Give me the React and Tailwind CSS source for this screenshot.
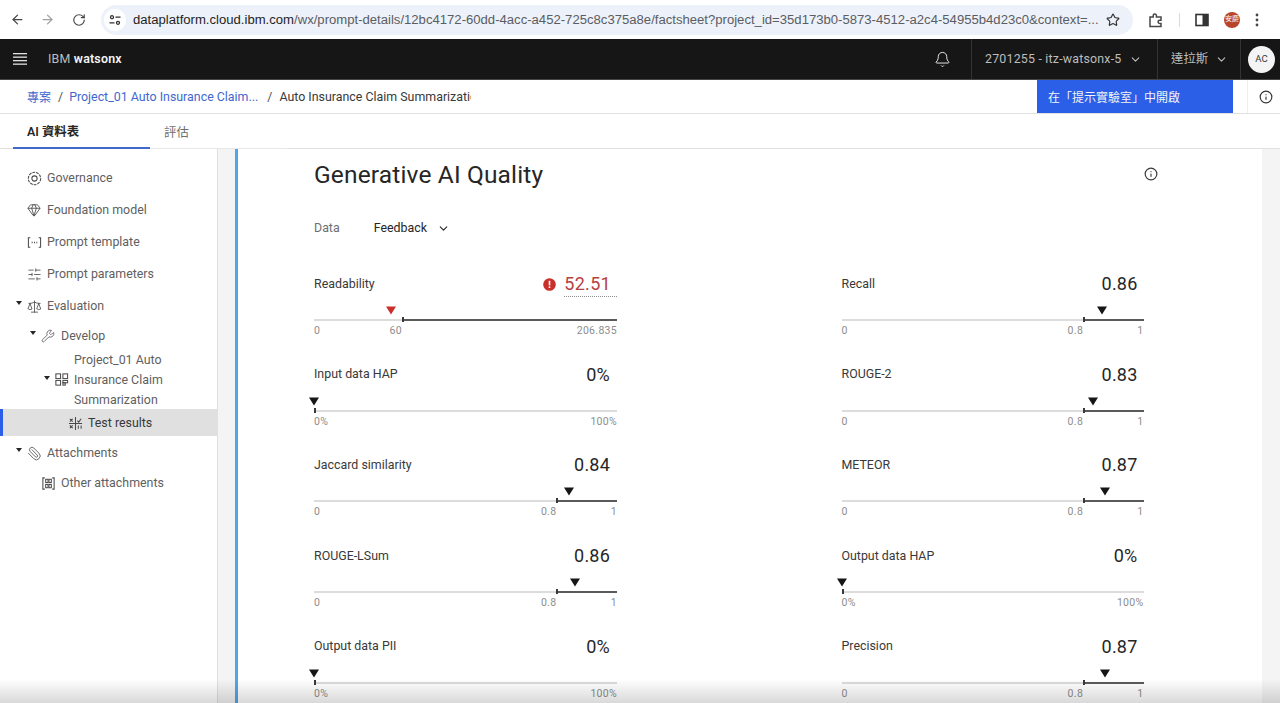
import React from "react";
import { ArrowLeft, ArrowRight, RotateCw, Star, Bell, ChevronDown, Info, Wrench, Paperclip, Scale, SlidersHorizontal, Gem } from "lucide-react";

function Tri({ red }) {
  return (
    <svg width="12" height="9" viewBox="0 0 12 9" className="block">
      <path d="M1 0.5h10L6 8.5z" fill={red ? "#c9302c" : "#161616"} />
    </svg>
  );
}

function Metric({ label, value, min, thr, max, thrPct, markPct, full, red, w, vp }) {
  return (
    <div className={`h-[90.7px] ${w}`}>
      <div className="flex h-[30px] items-center justify-between">
        <span className="text-[12.4px] text-[#393939]">{label}</span>
        {red ? (
          <span className="flex items-center">
            <svg width="13" height="13" viewBox="0 0 13 13" className="mr-[8px]">
              <circle cx="6.5" cy="6.5" r="6.3" fill="#c9302c" />
              <rect x="5.7" y="2.8" width="1.6" height="4.6" fill="#fff" />
              <rect x="5.7" y="8.4" width="1.6" height="1.6" fill="#fff" />
            </svg>
            <span className="border-b border-dotted border-[#8d8d8d] pr-[6px] text-[18px] leading-[24px] tracking-[0.3px] text-[#b5413f]">{value}</span>
          </span>
        ) : (
          <span className={`${vp} text-[18px] leading-[24px] tracking-[0.2px] text-[#262626]`}>{value}</span>
        )}
      </div>
      <div className="relative mt-[4px] h-[21px]">
        <div className="absolute top-[3px]" style={{ left: `calc(${markPct}% - 6px)` }}>
          <Tri red={red} />
        </div>
        <div className="absolute inset-x-0 top-[16px] h-[2px] bg-[#dcdcdc]" />
        {full ? (
          <div className="absolute left-0 top-[14px] h-[5px] w-[2px] bg-[#393939]" />
        ) : (
          <>
            <div className="absolute right-0 top-[16px] h-[2px] bg-[#5a5a5a]" style={{ left: `${thrPct}%` }} />
            <div className="absolute top-[14px] h-[5px] w-[2px] bg-[#393939]" style={{ left: `${thrPct}%` }} />
          </>
        )}
      </div>
      <div className="relative flex justify-between text-[10.5px] leading-[14px] tracking-[0.3px] text-[#8d8d8d]">
        <span>{min}</span>
        {thr && (
          <span className="absolute -translate-x-full" style={{ left: `${thrPct}%` }}>
            {thr}
          </span>
        )}
        <span>{max}</span>
      </div>
    </div>
  );
}

const left = [
  { label: "Readability", value: "52.51", min: "0", thr: "60", max: "206.835", thrPct: 29, markPct: 25.4, red: true },
  { label: "Input data HAP", value: "0%", min: "0%", max: "100%", markPct: 0, full: true },
  { label: "Jaccard similarity", value: "0.84", min: "0", thr: "0.8", max: "1", thrPct: 80, markPct: 84.2 },
  { label: "ROUGE-LSum", value: "0.86", min: "0", thr: "0.8", max: "1", thrPct: 80, markPct: 86.2 },
  { label: "Output data PII", value: "0%", min: "0%", max: "100%", markPct: 0, full: true },
];
const right = [
  { label: "Recall", value: "0.86", min: "0", thr: "0.8", max: "1", thrPct: 80, markPct: 86.2 },
  { label: "ROUGE-2", value: "0.83", min: "0", thr: "0.8", max: "1", thrPct: 80, markPct: 83.2 },
  { label: "METEOR", value: "0.87", min: "0", thr: "0.8", max: "1", thrPct: 80, markPct: 87.2 },
  { label: "Output data HAP", value: "0%", min: "0%", max: "100%", markPct: 0, full: true },
  { label: "Precision", value: "0.87", min: "0", thr: "0.8", max: "1", thrPct: 80, markPct: 87.2 },
];

const Svg = ({ children, size = 15 }) => (
  <svg width={size} height={size} viewBox="0 0 16 16" fill="none" stroke="#4a4a4a" strokeWidth="1.1" className="shrink-0">
    {children}
  </svg>
);

const GovIcon = () => (
  <Svg>
    <circle cx="8" cy="8" r="6.6" strokeDasharray="3 1" />
    <circle cx="8" cy="8" r="2.8" />
  </Svg>
);
const TemplateIcon = () => (
  <Svg>
    <path d="M3.5 3H1.5v10h2M12.5 3h2v10h-2" />
    <path d="M5 8h1M7.5 8h1M10 8h1" strokeWidth="1.5" />
  </Svg>
);
const FlowIcon = () => (
  <Svg>
    <rect x="2" y="2" width="5" height="5" />
    <rect x="9.5" y="2" width="5" height="5" />
    <rect x="2" y="9" width="5" height="5" />
    <rect x="9.5" y="9" width="5" height="2.5" />
    <rect x="9.5" y="11.5" width="2.5" height="2.5" />
  </Svg>
);
const TestIcon = () => (
  <Svg>
    <path d="M8 1v14M1 8h14" />
    <path d="M2 3l3 3M5 3l-3 3M10 5l1.5 1.5L14 3M2 10l3 3M5 10l-3 3M11 10v3.5M14 10v3.5" />
  </Svg>
);
const OtherIcon = () => (
  <Svg>
    <path d="M4 2H2v12h2M12 2h2v12h-2" />
    <rect x="5" y="3.5" width="2.5" height="3.5" />
    <rect x="8.5" y="3.5" width="2.5" height="3.5" />
    <rect x="5" y="9" width="2.5" height="3.5" />
    <rect x="8.5" y="9" width="2.5" height="3.5" />
  </Svg>
);

const Caret = () => <span className="h-0 w-0 border-x-[3.5px] border-t-[4.5px] border-x-transparent border-t-[#262626]" />;

function NavItem({ pad, caret, icon, children, h = "h-[32px]", active, textPad = "" }) {
  return (
    <div
      className={`relative flex items-center text-[12.4px] ${h} ${active ? "border-l-[3px] border-[#2b5fe8] bg-[#e0e0e0] text-[#393939]" : "text-[#5f5f5f]"} ${textPad}`}
      style={{ paddingLeft: active ? pad - 3 : pad }}
    >
      {caret && (
        <span className="absolute flex" style={{ left: pad - 11, top: "calc(50% - 5px)" }}>
          <Caret />
        </span>
      )}
      <span className="flex w-[20px] shrink-0">{icon}</span>
      <span>{children}</span>
    </div>
  );
}

export default function App() {
  return (
    <div className="flex h-[703px] w-[1280px] flex-col overflow-hidden bg-white font-['Roboto','Noto_Sans_CJK_TC',sans-serif]">
      {/* browser bar */}
      <div className="flex h-[39px] shrink-0 items-center bg-white">
        <ArrowLeft size={15} className="ml-[10px] text-[#474747]" strokeWidth={2} />
        <ArrowRight size={15} className="ml-[15px] text-[#a0a0a0]" strokeWidth={2} />
        <RotateCw size={14} className="ml-[17px] text-[#474747]" strokeWidth={2} />
        <div className="ml-[15px] flex h-[30px] w-[1032px] items-center rounded-full bg-[#edf1f9] pl-[3px]">
          <span className="flex h-[22px] w-[22px] items-center justify-center rounded-full bg-white">
            <svg width="12" height="12" viewBox="0 0 12 12" fill="none" stroke="#333" strokeWidth="1.3">
              <circle cx="3" cy="3.2" r="1.5" />
              <path d="M6.5 3.2H11.5M0.5 8.8H5.5" />
              <circle cx="9" cy="8.8" r="1.5" />
            </svg>
          </span>
          <span className="ml-[7px] whitespace-nowrap font-['Liberation_Sans',sans-serif] text-[13.12px] text-[#5a5d63]">
            <span className="text-[#1f1f1f]">dataplatform.cloud.ibm.com</span>/wx/prompt-details/12bc4172-60dd-4acc-a452-725c8c375a8e/factsheet?project_id=35d173b0-5873-4512-a2c4-54955b4d23c0&amp;context=...
          </span>
          <Star size={14} className="ml-auto mr-[13px] shrink-0 text-[#333]" strokeWidth={2} />
        </div>
        <svg width="16" height="16" viewBox="0 0 16 16" fill="none" stroke="#474747" strokeWidth="1.5" className="ml-[15px]">
          <path d="M2 5h3.2V3.6a1.6 1.6 0 0 1 3.2 0V5H13v3.2h-1.3a1.6 1.6 0 0 0 0 3.2H13V14.5H2z" />
        </svg>
        <span className="ml-[15px] h-[14px] w-px bg-[#d5dbe6]" />
        <svg width="14" height="14" viewBox="0 0 14 14" className="ml-[15px]">
          <rect x="1" y="1.5" width="12" height="11" fill="none" stroke="#333" strokeWidth="1.6" />
          <rect x="7.5" y="1.5" width="5.5" height="11" fill="#333" />
        </svg>
        <span className="ml-[15px] flex h-[16px] w-[16px] items-center justify-center rounded-full bg-[#b8452a] text-[7px] text-white">安慶</span>
        <svg width="4" height="14" viewBox="0 0 4 14" fill="#474747" className="ml-[15px]">
          <circle cx="2" cy="2" r="1.4" />
          <circle cx="2" cy="7" r="1.4" />
          <circle cx="2" cy="12" r="1.4" />
        </svg>
      </div>
      {/* header */}
      <div className="flex h-[41px] shrink-0 items-center border-b border-[#444] bg-[#161616] text-[12.4px] text-[#bdbdbd]">
        <svg width="14" height="12" viewBox="0 0 14 12" className="ml-[13px]" fill="#e0e0e0">
          <rect y="0" width="14" height="1.3" />
          <rect y="3.5" width="14" height="1.3" />
          <rect y="7" width="14" height="1.3" />
          <rect y="10.5" width="14" height="1.3" />
        </svg>
        <span className="ml-[21px] tracking-[0.2px]">IBM <span className="font-semibold text-[#f4f4f4]">watsonx</span></span>
        <Bell size={17} strokeWidth={1.3} className="ml-auto text-[#f4f4f4]" />
        <div className="ml-[20px] flex h-full w-[186px] items-center border-l border-[#333] pl-[13px] tracking-[0.2px]">
          2701255 - itz-watsonx-5
          <ChevronDown size={13} className="ml-[7px]" />
        </div>
        <div className="flex h-full w-[83px] items-center border-l border-[#333] pl-[13px]">
          達拉斯
          <ChevronDown size={13} className="ml-[7px]" />
        </div>
        <div className="flex h-full w-[40px] items-center border-l border-[#333] pl-[7px]">
          <span className="flex h-[27px] w-[27px] shrink-0 items-center justify-center rounded-full bg-[#f4f4f4] text-[9.5px] text-[#393939]">AC</span>
        </div>
      </div>
      {/* breadcrumb */}
      <div className="flex h-[34px] shrink-0 items-center border-b border-[#e0e0e0] text-[12.4px]">
        <div className="flex h-full items-center pt-[2px]">
          <span className="ml-[27px] text-[12px] text-[#3f68cf]">專案</span>
          <span className="ml-[7px] text-[#525252]">/</span>
          <span className="ml-[6px] text-[#3f68cf]">Project_01 Auto Insurance Claim...</span>
          <span className="ml-[9px] text-[#525252]">/</span>
          <span className="ml-[7px] w-[192px] overflow-hidden whitespace-nowrap text-[#393939]">Auto Insurance Claim Summarization</span>
        </div>
        <div className="ml-auto flex h-full w-[196px] items-center bg-[#2b5fe8] pl-[11px] pt-[2px] text-[12px] text-[#f4f4f4]">在「提示實驗室」中開啟</div>
        <div className="ml-[14px] flex h-full w-[33px] items-center border-l border-[#eeeeee] pl-[11px]">
          <Info size={14} className="text-[#333]" />
        </div>
      </div>
      {/* tabs */}
      <div className="flex h-[35px] shrink-0 border-b border-[#e0e0e0] text-[12.4px]">
        <div className="ml-[13px] flex h-[35px] w-[137px] items-center border-b-2 border-[#4169c9] pl-[14px] pt-[4px] font-semibold text-[#262626]">AI 資料表</div>
        <div className="flex h-[35px] w-[137px] items-center border-b border-[#e8e8e8] pl-[14px] pt-[4px] text-[#6f6f6f]">評估</div>
      </div>
      {/* body */}
      <div className="relative flex min-h-0 flex-1">
        <aside className="w-[218px] shrink-0 border-r border-[#e0e0e0] pt-[13px]">
          <NavItem pad={27} icon={<GovIcon />}>Governance</NavItem>
          <NavItem pad={27} icon={<Gem size={14} strokeWidth={1.5} className="text-[#4a4a4a]" />}>Foundation model</NavItem>
          <NavItem pad={27} icon={<TemplateIcon />}>Prompt template</NavItem>
          <NavItem pad={27} icon={<SlidersHorizontal size={15} strokeWidth={1.3} className="text-[#4a4a4a]" />}>Prompt parameters</NavItem>
          <NavItem pad={27} caret icon={<Scale size={15} strokeWidth={1.3} className="text-[#4a4a4a]" />}>Evaluation</NavItem>
          <NavItem pad={41} caret h="h-[28px]" icon={<Wrench size={14} strokeWidth={1.3} className="text-[#4a4a4a]" />}>Develop</NavItem>
          <div className="relative flex h-[59px] items-center pl-[54px] text-[12.4px] leading-[20px] text-[#5f5f5f]">
            <span className="absolute left-[44px] top-[26px] flex"><Caret /></span>
            <span className="flex w-[20px] shrink-0"><FlowIcon /></span>
            <span>Project_01 Auto<br />Insurance Claim<br />Summarization</span>
          </div>
          <NavItem pad={68} h="h-[27px]" active textPad="pt-[1px]" icon={<TestIcon />}>Test results</NavItem>
          <NavItem pad={27} caret h="h-[34px]" icon={<Paperclip size={15} strokeWidth={1.3} className="-scale-x-100 text-[#4a4a4a]" />}>Attachments</NavItem>
          <NavItem pad={41} h="h-[26px]" icon={<OtherIcon />}>Other attachments</NavItem>
        </aside>
        <div className="w-[17px] shrink-0 bg-[#f4f4f4]" />
        <main className="min-w-0 flex-1 border-l-[3px] border-[#53a5ea] pl-[76px]">
          <div className="relative flex h-[53px] items-center">
            <h1 className="text-[24.5px] font-normal tracking-[0.15px] text-[#262626]">Generative AI Quality</h1>
            <Info size={14} className="absolute left-[830px] top-[18px] text-[#393939]" />
          </div>
          <div className="mt-[12px] flex h-[28px] items-center text-[12.4px]">
            <span className="text-[#6f6f6f]">Data</span>
            <span className="ml-[34px] text-[#262626]">Feedback</span>
            <ChevronDown size={13} className="ml-[10px] text-[#262626]" />
          </div>
          <div className="mt-[27px] flex">
            <div className="w-[527.5px] shrink-0">{left.map((m) => <Metric key={m.label} w="w-[303px]" vp="pr-[7px]" {...m} />)}</div>
            <div>{right.map((m) => <Metric key={m.label} w="w-[302px]" vp="pr-[6px]" {...m} />)}</div>
          </div>
        </main>
        <div className="w-[18px] shrink-0 bg-[#f4f4f4]" />
        <div className="pointer-events-none absolute inset-x-0 bottom-0 h-[24px] bg-gradient-to-b from-transparent to-black/15" />
      </div>
    </div>
  );
}
